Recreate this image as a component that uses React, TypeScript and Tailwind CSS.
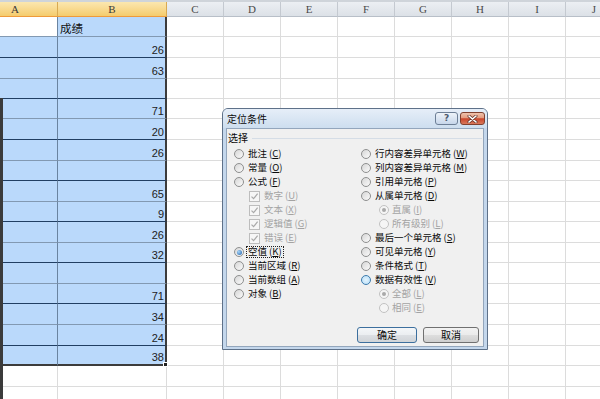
import React from "react";

const rowHeights = [20, 21, 21, 20, 20, 21, 21, 20, 21, 20, 21, 20, 21, 20, 21, 21, 20, 21, 21];
const values = ["成绩", "26", "63", "", "71", "20", "26", "", "65", "9", "26", "32", "", "71", "34", "24", "38", "", ""];
const colWidths = [58, 109, 57, 57, 57, 57, 57, 57, 57, 57];
const colNames = ["A", "B", "C", "D", "E", "F", "G", "H", "I", "J"];

const cjk = "font-['Noto_Sans_CJK_SC','Noto_Sans',sans-serif]";

function Header() {
  return (
    <div className="flex h-[17px] shrink-0 border-t-[2px] border-[#cfd4da]">
      {colNames.map((n, i) => {
        const sel = i < 2;
        return (
          <div
            key={n}
            style={{ width: colWidths[i] }}
            className={
              sel
                ? "flex shrink-0 items-center border-b border-r border-b-[#ef9a3a] border-r-[#d9aa52] bg-gradient-to-b from-[#fbe7b0] to-[#f5cc6c] font-['Liberation_Serif',serif] text-[11px] leading-none text-[#3a3a3a]"
                : "flex shrink-0 items-center border-b border-r border-b-[#b8bfc8] border-r-[#c4c9d0] bg-gradient-to-b from-[#eceff3] to-[#dce1e7] font-['Liberation_Serif',serif] text-[11px] leading-none text-[#4a4a4a]"
            }
          >
            <span className={i === 0 ? "pl-[11px]" : "w-full text-center"}>{n}</span>
          </div>
        );
      })}
    </div>
  );
}

function Row({ r }: { r: number }) {
  const h = rowHeights[r];
  return (
    <div className="flex shrink-0" style={{ height: h }}>
      {colWidths.map((w, c) => {
        const inSel = c <= 1 && r <= 16;
        const blue = (c === 1 && r <= 16) || (c === 0 && r >= 1 && r <= 16);
        let bottom = "border-b border-b-[#dcdcdc]";
        if (inSel) {
          if (r === 16) bottom = "border-b-[2px] border-b-[#3c3c3c]";
          else if (r % 2 === 0) bottom = "border-b border-b-[#8299b2]";
          else bottom = "border-b border-b-[#213f63]";
        }
        let right = "border-r border-r-[#dcdcdc]";
        if (c === 0 && r <= 16) right = "border-r border-r-[#6a84a0]";
        if (c === 1 && r <= 16) right = "border-r-[2px] border-r-[#3c3c3c]";
        const bg = blue ? "bg-[#bad9fb]" : "bg-white";
        const v = c === 1 ? values[r] : "";
        const isText = r === 0;
        return (
          <div
            key={c}
            style={{ width: w }}
            className={`flex shrink-0 items-end ${bottom} ${right} ${bg} ${isText ? "justify-start pl-[2px]" : "justify-end pr-[1px]"}`}
          >
            {v &&
              (isText ? (
                <span className={`${cjk} pb-[1px] text-[11.5px] leading-[13px] text-[#111]`}>{v}</span>
              ) : (
                <span className="pb-[1px] font-['Liberation_Sans',sans-serif] text-[11px] leading-[11px] text-[#222]">{v}</span>
              ))}
          </div>
        );
      })}
    </div>
  );
}

function Radio({ checked = false, disabled = false, hover = false }: { checked?: boolean; disabled?: boolean; hover?: boolean }) {
  const ring = disabled
    ? "border-[#c2c2c2] bg-[#f5f5f5]"
    : hover
    ? "border-[#3d7bad] bg-[radial-gradient(circle_at_50%_50%,#e4f4fe_0%,#b4dcf6_100%)]"
    : "border-[#8e8f8f] bg-[linear-gradient(135deg,#d6d6d6,#fbfbfb)]";
  return (
    <span className={`flex h-[10px] w-[10px] shrink-0 items-center justify-center rounded-full border ${ring}`}>
      {checked && (
        <span
          className={
            disabled
              ? "h-[4px] w-[4px] rounded-full bg-[#a9a9a9]"
              : "h-[5px] w-[5px] rounded-full bg-[radial-gradient(circle_at_35%_35%,#a7d6fa,#1d5fa8)]"
          }
        />
      )}
    </span>
  );
}

function Check() {
  return (
    <span className="flex h-[11px] w-[11px] shrink-0 items-center justify-center border border-[#bdbdbd] bg-[#f6f6f6]">
      <svg width="9" height="9" viewBox="0 0 9 9">
        <path d="M1.5 4.6 L3.6 6.7 L7.6 1.6" stroke="#a9a9a9" strokeWidth="1.2" fill="none" />
      </svg>
    </span>
  );
}

function Label({ t, k, disabled = false, focus = false }: { t: string; k: string; disabled?: boolean; focus?: boolean }) {
  return (
    <span
      className={`${focus ? "border border-dotted border-[#222] px-[1px]" : "border border-transparent px-[1px]"} whitespace-nowrap text-[9.5px] ${
        disabled ? "text-[#a3a3a3]" : "text-[#0a0a0a]"
      }`}
    >
      {t}
      <span className="ml-[2px]">
        (<span className="underline">{k}</span>)
      </span>
    </span>
  );
}

type Item = { kind: "radio" | "check" | "sub"; t: string; k: string; checked?: boolean; disabled?: boolean; hover?: boolean; focus?: boolean };

const leftItems: Item[] = [
  { kind: "radio", t: "批注", k: "C" },
  { kind: "radio", t: "常量", k: "O" },
  { kind: "radio", t: "公式", k: "F" },
  { kind: "check", t: "数字", k: "U", disabled: true },
  { kind: "check", t: "文本", k: "X", disabled: true },
  { kind: "check", t: "逻辑值", k: "G", disabled: true },
  { kind: "check", t: "错误", k: "E", disabled: true },
  { kind: "radio", t: "空值", k: "K", checked: true, focus: true },
  { kind: "radio", t: "当前区域", k: "R" },
  { kind: "radio", t: "当前数组", k: "A" },
  { kind: "radio", t: "对象", k: "B" },
];

const rightItems: Item[] = [
  { kind: "radio", t: "行内容差异单元格", k: "W" },
  { kind: "radio", t: "列内容差异单元格", k: "M" },
  { kind: "radio", t: "引用单元格", k: "P" },
  { kind: "radio", t: "从属单元格", k: "D" },
  { kind: "sub", t: "直属", k: "I", checked: true, disabled: true },
  { kind: "sub", t: "所有级别", k: "L", disabled: true },
  { kind: "radio", t: "最后一个单元格", k: "S" },
  { kind: "radio", t: "可见单元格", k: "Y" },
  { kind: "radio", t: "条件格式", k: "T" },
  { kind: "radio", t: "数据有效性", k: "V", hover: true },
  { kind: "sub", t: "全部", k: "L", checked: true, disabled: true },
  { kind: "sub", t: "相同", k: "E", disabled: true },
];

function ItemRow({ it }: { it: Item }) {
  if (it.kind === "check") {
    return (
      <div className="flex h-[14px] items-center gap-[2px] pl-[15px]">
        <Check />
        <Label t={it.t} k={it.k} disabled />
      </div>
    );
  }
  if (it.kind === "sub") {
    return (
      <div className="flex h-[14px] items-center gap-[1px] pl-[18px]">
        <Radio checked={it.checked} disabled />
        <Label t={it.t} k={it.k} disabled />
      </div>
    );
  }
  return (
    <div className="flex h-[14px] items-center gap-[2px]">
      <Radio checked={it.checked} hover={it.hover} />
      <Label t={it.t} k={it.k} focus={it.focus} />
    </div>
  );
}

function Dialog() {
  return (
    <div className={`absolute left-[222px] top-[108px] flex h-[242px] w-[266px] flex-col rounded-t-[6px] border border-[#5e7189] bg-[#c4d7ec] ${cjk} text-[10px] leading-none`}>
      <div className="flex h-[19px] shrink-0 justify-between rounded-t-[5px] bg-gradient-to-b from-[#e6eef8] to-[#cddeef] pl-[4px] pr-[2px]">
        <span className="self-center text-[10px] text-[#0a0a0a]">定位条件</span>
        <div className="mt-[3px] flex gap-[2px] self-start">
          <div className="flex h-[13px] w-[23px] items-center justify-center rounded-[3px] border border-[#6d7f96] bg-gradient-to-b from-[#eef3fa] to-[#c7d7ea]">
            <span className="font-['DejaVu_Sans',sans-serif] text-[9px] font-bold leading-none text-[#4b5a6e]">?</span>
          </div>
          <div className="flex h-[13px] w-[25px] items-center justify-center rounded-[3px] border border-[#80402f] bg-[linear-gradient(to_bottom,#efc3ad_0%,#e49b7f_45%,#c9442a_52%,#d9785a_100%)]">
            <svg width="11" height="8" viewBox="0 0 11 8">
              <path d="M2 1 L9 7 M9 1 L2 7" stroke="#6b3a30" strokeWidth="3" strokeLinecap="round" />
              <path d="M2 1 L9 7 M9 1 L2 7" stroke="#ffffff" strokeWidth="1.6" strokeLinecap="round" />
            </svg>
          </div>
        </div>
      </div>
      <div className="mx-[3px] flex h-[219px] shrink-0 flex-col border border-[#93a6bc] bg-[#f0f0f0] pt-[1px]">
        <div className="mt-[1px] flex h-[14px] items-center pl-[1px] pr-[1px]">
          <span className="text-[10px] text-[#0a0a0a]">选择</span>
          <div className="ml-[4px] h-[1px] flex-1 bg-[#d5dde6]" />
        </div>
        <div className="mt-[2px] flex">
          <div className="flex w-[134px] shrink-0 flex-col pl-[7px]">
            {leftItems.map((it, i) => (
              <ItemRow key={i} it={it} />
            ))}
          </div>
          <div className="flex flex-col">
            {rightItems.map((it, i) => (
              <ItemRow key={i} it={it} />
            ))}
          </div>
        </div>
        <div className="mt-auto flex justify-end gap-[6px] pb-[3px] pr-[4px]">
          <div className="flex h-[16px] w-[60px] items-center justify-center rounded-[3px] border border-[#3c6f9e] bg-[linear-gradient(to_bottom,#f4f6f8_0%,#ebeef1_48%,#dcdfe3_52%,#d0d4d8_100%)] text-[#0a0a0a]">
            确定
          </div>
          <div className="flex h-[16px] w-[56px] items-center justify-center rounded-[3px] border border-[#707070] bg-[linear-gradient(to_bottom,#f2f2f2_0%,#ebebeb_48%,#dddddd_52%,#cfcfcf_100%)] text-[#0a0a0a]">
            取消
          </div>
        </div>
      </div>
    </div>
  );
}

export default function App() {
  return (
    <div className="relative h-[399px] w-[600px] overflow-hidden bg-white">
      <div className="flex flex-col">
        <Header />
        {rowHeights.map((_, r) => (
          <Row key={r} r={r} />
        ))}
      </div>
      <div className="absolute bottom-0 left-0 top-[98px] w-[3px] bg-[#3b3b3b]" />
      <div className="absolute left-[163px] top-[362px] h-[5px] w-[5px] border border-white bg-[#222]" />
      <Dialog />
    </div>
  );
}
